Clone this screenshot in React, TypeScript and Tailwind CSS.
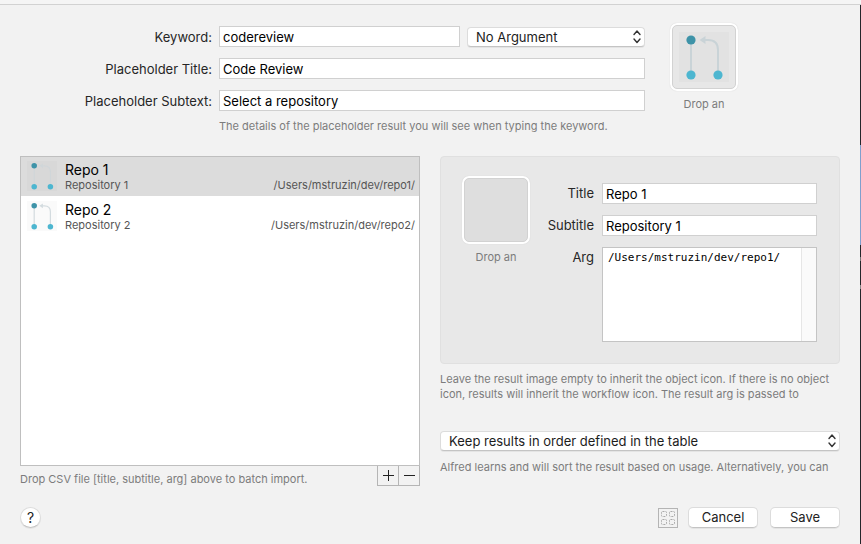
import React, { useState } from "react";

type Repo = { title: string; subtitle: string; arg: string };

const repos: Repo[] = [
  { title: "Repo 1", subtitle: "Repository 1", arg: "/Users/mstruzin/dev/repo1/" },
  { title: "Repo 2", subtitle: "Repository 2", arg: "/Users/mstruzin/dev/repo2/" },
];

const fieldClass =
  "h-[21px] w-full min-w-0 border border-[#d0d0d0] bg-white px-[3px] text-[13px] leading-[19px] text-black outline-none";
const hintClass = "text-[11px] leading-[15px] text-[#7c7c7c]";
const buttonClass =
  "h-[21px] w-[70px] rounded-[5px] border border-[#dcdcdc] border-b-[#c4c4c4] bg-white text-[13px] leading-[19px] text-[#222] shadow-[0_1px_0_#e4e4e4]";

function PullRequestIcon({ className, line }: { className: string; line: string }) {
  return (
    <svg viewBox="0 0 50 50" className={className} aria-hidden="true">
      <rect width="50" height="50" fill="#808080" fillOpacity="0.04" />
      <g fill="none" stroke={line} strokeWidth="2">
        <path d="M12 8v35" />
        <path d="M25 8h4q10 0 10 10v25" />
      </g>
      <path d="M20.500 8l6-4v8z" fill={line} />
      <circle cx="12" cy="8" r="4.600" fill="#3e93a8" />
      <circle cx="12" cy="43" r="4.600" fill="#4db6d0" />
      <circle cx="39" cy="43" r="4.600" fill="#4db6d0" />
    </svg>
  );
}

function DropWell({ fill, children }: { fill: string; children?: React.ReactNode }) {
  return (
    <div className="flex w-[68px] shrink-0 flex-col items-center">
      <div className="h-[68px] w-[68px] rounded-[7px] bg-white p-[2px] shadow-[0_0_1px_#c8c8c8]">
        <div
          className={`flex h-full w-full items-center justify-center rounded-[5px] border border-[#d2d2d2] ${fill}`}
        >
          {children}
        </div>
      </div>
      <p className="mt-[6px] text-[11px] leading-[15px] text-[#7c7c7c]">Drop an</p>
    </div>
  );
}

function PopUp({ id, label, options }: { id: string; label: string; options: string[] }) {
  return (
    <div className="relative w-full">
      <select
        id={id}
        aria-label={label}
        className="block h-5 w-full appearance-none rounded-[4px] border border-[#dcdcdc] border-b-[#c4c4c4] bg-white pr-6 pl-2 text-[13px] leading-[18px] text-[#1c1c1c] shadow-[0_1px_0_#e4e4e4] outline-none"
      >
        {options.map((o) => (
          <option key={o}>{o}</option>
        ))}
      </select>
      <svg
        viewBox="0 0 8 14"
        className="pointer-events-none absolute top-[3px] right-1 h-[14px] w-2"
        fill="none"
        stroke="#333"
        strokeWidth="1.400"
        strokeLinecap="round"
        strokeLinejoin="round"
        aria-hidden="true"
      >
        <path d="M1 4.500l3-3.500L7 4.500M1 9l3 3.500L7 9" />
      </svg>
    </div>
  );
}

export default function App() {
  const [selected, setSelected] = useState(0);
  const repo = repos[selected];
  return (
    <div className="flex min-h-screen flex-col bg-[#f2f2f2] font-[Inter,'Liberation_Sans',sans-serif] text-[#262626]">
      <div className="h-[5px] border-b border-[#d2d2d2] bg-[#f5f5f5]" />
      <div className="flex flex-1">
        <main className="min-w-0 flex-1 px-5 pb-4">
          <section className="flex h-[151px] pt-[18px]">
            <div className="flex-1 pt-[3px]">
              <div className="grid auto-rows-[21px] grid-cols-[192px_1fr] items-center gap-x-[7px] gap-y-[11px] text-[13px] leading-4">
                <label htmlFor="keyword" className="text-right">Keyword:</label>
                <div className="flex items-center gap-[7px]">
                  <input id="keyword" className={fieldClass} defaultValue="codereview" />
                  <div className="w-[178px] shrink-0">
                    <PopUp id="argument" label="Argument" options={["No Argument", "Argument Required", "Argument Optional"]} />
                  </div>
                </div>
                <label htmlFor="ptitle" className="text-right">Placeholder Title:</label>
                <input id="ptitle" className={fieldClass} defaultValue="Code Review" />
                <label htmlFor="psub" className="text-right">Placeholder Subtext:</label>
                <input id="psub" className={fieldClass} defaultValue="Select a repository" />
              </div>
              <p className={`mt-2 ml-[199px] whitespace-nowrap ${hintClass}`}>
                The details of the placeholder result you will see when typing the keyword.
              </p>
            </div>
            <div className="mr-[102px] ml-[25px]">
              <DropWell fill="bg-[#e7e7e7]">
                <PullRequestIcon className="h-[50px] w-[50px]" line="#c9d3d7" />
              </DropWell>
            </div>
          </section>

          <section className="grid grid-cols-2 gap-5">
            <div>
              <ul className="flex h-[310px] flex-col gap-px border border-[#bfbfbf] bg-white">
                {repos.map((r, i) => (
                  <li key={r.title}>
                    <button
                      type="button"
                      onClick={() => setSelected(i)}
                      className={`flex h-[39px] w-full items-start pr-1 pl-[6px] text-left ${i === selected ? "bg-[#dcdcdc]" : "bg-white"}`}
                    >
                      <PullRequestIcon className="mt-1 h-[30px] w-[30px]" line={i === selected ? "#d0d6d9" : "#d3dbdf"} />
                      <span className="mt-[5px] ml-2 flex flex-1 flex-col">
                        <span className="text-sm leading-4 text-black">{r.title}</span>
                        <span className="flex justify-between text-[11px] leading-[14px] text-[#555]">
                          <span>{r.subtitle}</span>
                          <span>{r.arg}</span>
                        </span>
                      </span>
                    </button>
                  </li>
                ))}
              </ul>
              <div className="flex justify-between">
                <p className={`pt-[6px] ${hintClass}`}>Drop CSV file [title, subtitle, arg] above to batch import.</p>
                <div className="flex h-5 border-r border-b border-[#b5b5b5]">
                  <button type="button" aria-label="Add" className="flex w-[21px] items-center justify-center border-l border-[#b5b5b5]">
                    <svg viewBox="0 0 11 11" className="h-[11px] w-[11px]" stroke="#222" aria-hidden="true">
                      <path d="M0 5.500h11M5.500 0v11" />
                    </svg>
                  </button>
                  <button type="button" aria-label="Remove" className="flex w-[21px] items-center justify-center border-l border-[#b5b5b5]">
                    <svg viewBox="0 0 11 11" className="h-[11px] w-[11px]" stroke="#222" aria-hidden="true">
                      <path d="M0 5.500h11" />
                    </svg>
                  </button>
                </div>
              </div>
            </div>

            <div>
              <div className="flex h-[208px] rounded-[4px] border border-[#e0e0e0] bg-[#e8e8e8] pt-[19px] pr-[22px] pl-[21px]">
                <DropWell fill="bg-[#dedede]" />
                <div className="grid flex-1 grid-cols-[64px_1fr] content-start gap-x-2 gap-y-[11px] pt-[7px] text-[13px] leading-[21px]">
                  <label htmlFor="title" className="text-right">Title</label>
                  <input id="title" key={"t" + selected} className={fieldClass} defaultValue={repo.title} />
                  <label htmlFor="subtitle" className="text-right">Subtitle</label>
                  <input id="subtitle" key={"s" + selected} className={fieldClass} defaultValue={repo.subtitle} />
                  <label htmlFor="arg" className="text-right">Arg</label>
                  <div className="flex h-[95px] border border-[#c4c4c4] bg-white">
                    <textarea
                      id="arg"
                      key={"a" + selected}
                      className="min-w-0 flex-1 resize-none px-[5px] py-[2px] font-['DejaVu_Sans_Mono',monospace] text-[11px] leading-[15px] text-black outline-none"
                      defaultValue={repo.arg}
                    />
                    <div className="w-[15px] border-l border-[#e6e6e6] bg-[#fafafa]" />
                  </div>
                </div>
              </div>
              <p className={`mt-2 h-[59px] ${hintClass}`}>
                Leave the result image empty to inherit the object icon. If there is no object icon, results will inherit the workflow icon. The result arg is passed to
              </p>
              <PopUp id="order" label="Result order" options={["Keep results in order defined in the table", "Sort results by usage"]} />
              <p className={`mt-[9px] whitespace-nowrap ${hintClass}`}>
                Alfred learns and will sort the result based on usage. Alternatively, you can
              </p>
            </div>
          </section>

          <footer className="mt-5 flex h-[21px] items-center">
            <button
              type="button"
              aria-label="Help"
              className="h-[21px] w-[21px] rounded-full border border-[#dcdcdc] border-b-[#c4c4c4] bg-white text-sm leading-[19px] text-[#222] shadow-[0_1px_0_#e4e4e4]"
            >
              ?
            </button>
            <button type="button" aria-label="Layout" className="mr-[10px] ml-auto h-5 w-5">
              <svg viewBox="0 0 20 20" className="h-5 w-5" fill="none" aria-hidden="true">
                <rect x="0.500" y="0.500" width="19" height="19" stroke="#777" strokeDasharray="1 1" />
                <g stroke="#aaa" strokeDasharray="2 1">
                  <rect x="3.500" y="3.500" width="5" height="5" rx="1" />
                  <rect x="11.500" y="3.500" width="5" height="5" rx="1" />
                  <rect x="3.500" y="11.500" width="5" height="5" rx="1" />
                  <rect x="11.500" y="11.500" width="5" height="5" rx="1" />
                </g>
              </svg>
            </button>
            <button type="button" className={buttonClass}>Cancel</button>
            <button type="button" className={`ml-3 ${buttonClass}`}>Save</button>
          </footer>
        </main>
        <div className="flex w-px flex-col bg-[#24262a]">
          <div className="mt-[140px] h-[100px] bg-[#7f9fcd]" />
          <div className="mt-3 h-1 bg-[#777]" />
          <div className="mt-6 h-1 bg-[#888]" />
        </div>
      </div>
    </div>
  );
}
